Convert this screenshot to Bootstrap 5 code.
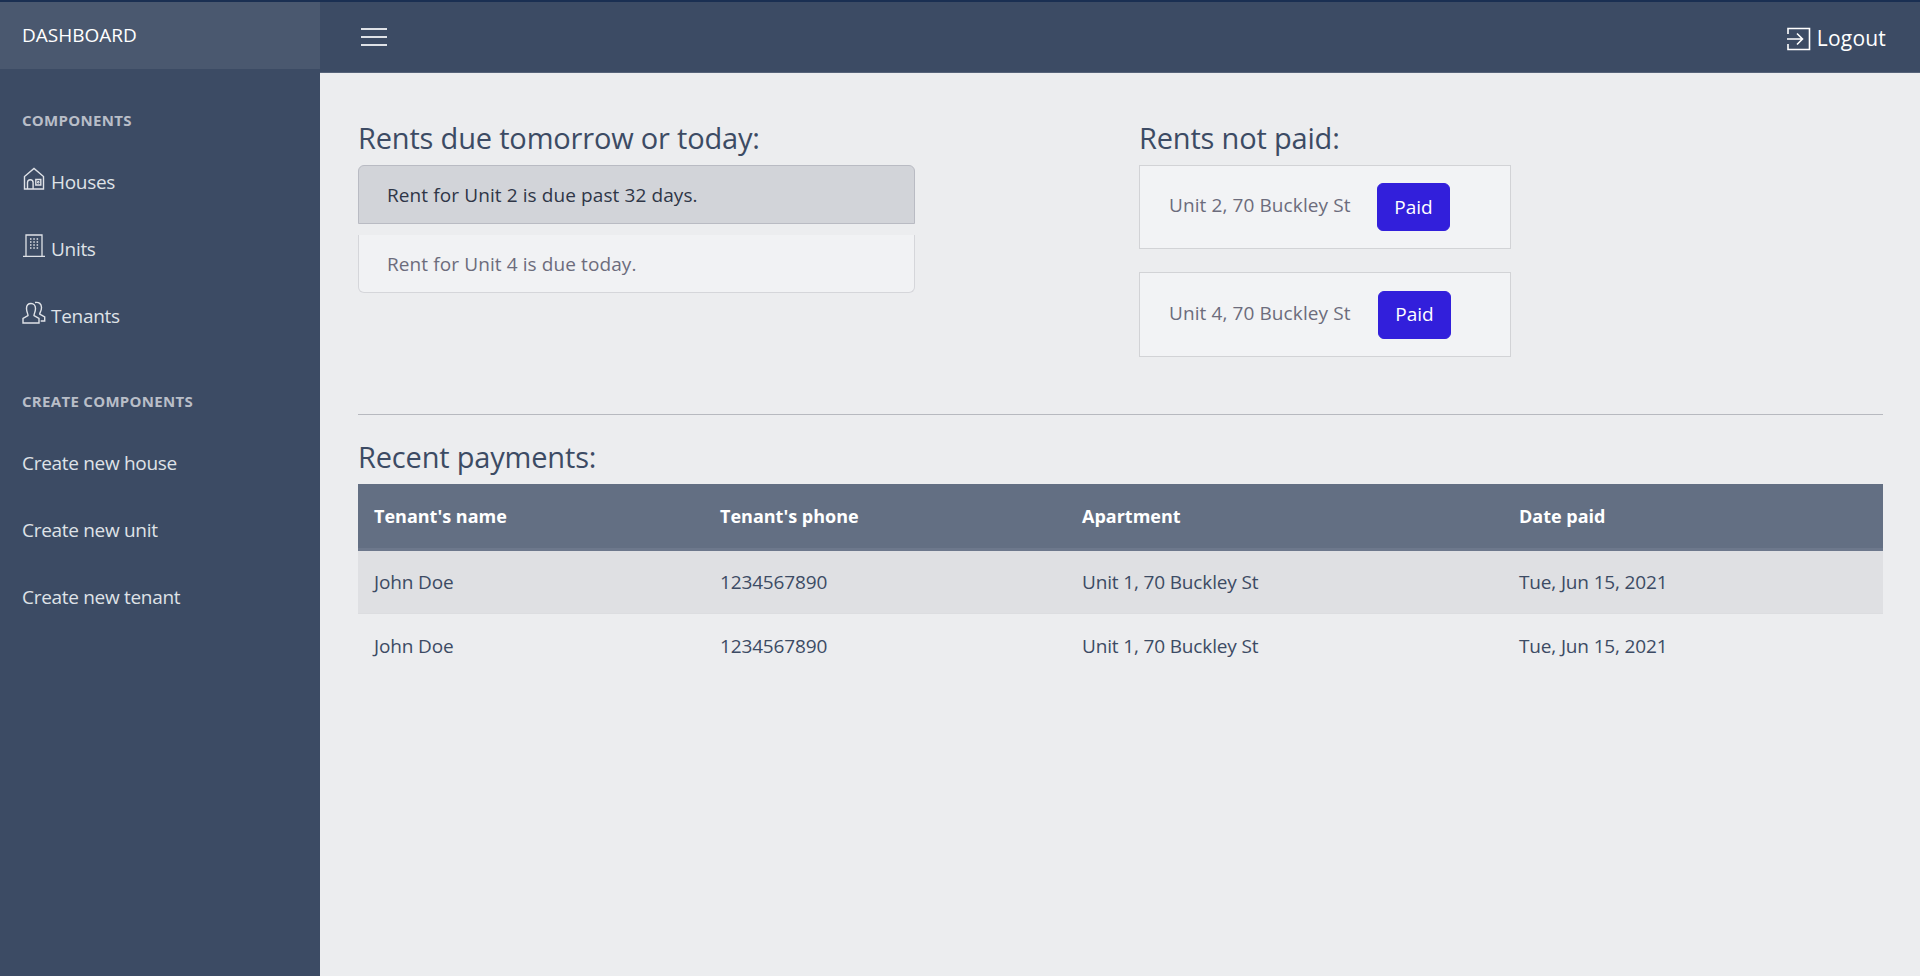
<!DOCTYPE html>
<html lang="en">
  <head>
    <meta charset="UTF-8" />
    <meta name="viewport" content="width=device-width, initial-scale=1.0" />
    <title>Dashboard</title>
    <link href="https://cdn.jsdelivr.net/npm/bootstrap@5.3.2/dist/css/bootstrap.min.css" rel="stylesheet" />
    <style>
      body {
        font-family: "Open Sans", "Noto Sans", sans-serif;
        background: #ecedef;
        color: #3c4b64;
        height: 976px;
        overflow: hidden;
        border-top: 2px solid #1a2f52;
      }
      .app-shell { height: 974px; }
      .side-nav { width: 320px; flex: none; background: #3c4b64; }
      .side-brand { height: 67px; background: #4a586f; color: #fff; font-size: 19px; padding-left: 22px; }
      .side-title { color: #b9bec8; font-size: 15px; font-weight: 700; padding-left: 22px; letter-spacing: 0.3px; line-height: 20px; }
      .side-link { color: #dfe2e7; font-size: 19px; padding-left: 22px; text-decoration: none; height: 67px; letter-spacing: -0.3px; }
      .side-link svg { margin-right: 5px; margin-top: -7px; }
      .side-group { margin-top: 19px; }
      .top-bar { height: 71px; background: #3c4b64; padding: 0 34px 0 41px; border-bottom: 1px solid #566379; }
      .top-bar a { color: #fff; font-size: 21px; text-decoration: none; letter-spacing: 0.2px; padding-top: 4px; gap: 6px; }
      .page-body { padding: 43px 37px 0 38px; }
      .block-title { font-size: 29px; font-weight: 400; color: #3c4b64; margin: 0; line-height: 44px; letter-spacing: -0.18px; height: 49px; }
      .recent-title { height: 52px; line-height: 50px; }
      .due-col { width: 781px; flex: none; }
      .due-list { width: 557px; }
      .due-list .list-group-item { height: 58px; padding: 1px 28px 0; font-size: 19px; letter-spacing: 0.1px; background: #f1f2f4; color: #6c6c7c; border-color: #d5d6da; display: flex; align-items: center; }
      .due-list .list-group-item.active-due { background: #d2d4d9; color: #2f3647; border-color: #b9bbc3; height: 59px; margin-bottom: 11px; border-bottom-width: 1px; }
      .due-list .list-group-item + .list-group-item { border-top-width: 0; }
      .unpaid-box { width: 372px; height: 84px; background: #f2f3f5; border: 1px solid #d2d3d6; padding-left: 29px; margin-bottom: 23px; border-radius: 0; color: #6c6c7c; font-size: 19px; letter-spacing: 0.1px; }
      .unpaid-box span { width: 208px; margin-top: -3px; }
      .unpaid-box + .unpaid-box { height: 85px; }
      .unpaid-box + .unpaid-box span { width: 209px; }
      .btn-paid { background: #321fdb; border-color: #321fdb; color: #fff; width: 73px; height: 48px; font-size: 19px; padding: 0; }
      .btn-paid:hover { background: #2a1ab9; border-color: #2a1ab9; color: #fff; }
      .sep-line { border-top: 1px solid #b7b9bf; opacity: 1; margin: 57px 0 17px; }
      .pay-table { font-size: 19px; letter-spacing: -0.15px; margin: 0; --bs-table-bg: transparent; color: #3c4b64; table-layout: fixed; }
      .pay-table th { background: #636f83; color: #fff; height: 65px; vertical-align: middle; padding: 2px 16px 0; font-weight: 700; font-size: 18px; letter-spacing: 0; border-bottom: 3px solid #6d788c; }
      .pay-table td { height: 64px; vertical-align: middle; padding: 1px 16px 0; color: #3c4b64; border-bottom: 1px solid #dcdde0; }
      .pay-table tbody tr:first-child td { background: #dfe0e3; }
      .pay-table tbody tr:last-child td { border-bottom: 0; }
    </style>
  </head>
  <body>
    <div class="d-flex app-shell">
      <aside class="side-nav d-flex flex-column">
        <div class="side-brand d-flex align-items-center">DASHBOARD</div>
        <div class="side-title" style="margin-top:41px">COMPONENTS</div>
        <nav class="d-flex flex-column side-group">
          <a class="side-link d-flex align-items-center" href="#">
            <svg width="24" height="24" viewBox="0 0 24 24" fill="none" stroke="currentColor" stroke-width="1.4"><path d="M2.500 22V9.500L12 1.500l9.500 8V22z"/><path d="M5.500 22v-6.500a2.800 2.800 0 0 1 5.600 0V22"/><path d="M13.800 12.500h5v5.500h-5z"/><path d="M15.600 14.500h1.400v1.500h-1.400z" stroke-width="1"/></svg>
            Houses
          </a>
          <a class="side-link d-flex align-items-center" href="#">
            <svg width="24" height="24" viewBox="0 0 24 24" fill="none" stroke="currentColor" stroke-width="1.300"><path d="M4 22V1h16v21M1 22.300h22"/><path d="M8 5h1.500M11.300 5h1.500M14.600 5h1.500M8 8h1.500M11.300 8h1.500M14.600 8h1.500M8 11h1.500M11.300 11h1.500M14.600 11h1.500M8 14h1.500M11.300 14h1.500M14.600 14h1.500" stroke-width="1.600"/></svg>
            Units
          </a>
          <a class="side-link d-flex align-items-center" href="#">
            <svg width="24" height="24" viewBox="0 0 24 24" fill="none" stroke="currentColor" stroke-width="1.400"><path d="M9 2.500c2.800 0 4.500 2 4.500 5S12 13 12 14.500l5 3v4.500H1v-4.500l5-3C6 13 4.500 10.500 4.500 7.500S6.200 2.500 9 2.500z"/><path d="M13 1.500c4-.8 6.500 1.500 6.500 5s-1.800 5-1.800 6.500l5 3v4h-4"/></svg>
            Tenants
          </a>
        </nav>
        <div class="side-title" style="margin-top:41px">CREATE COMPONENTS</div>
        <nav class="d-flex flex-column side-group">
          <a class="side-link d-flex align-items-center" href="#">Create new house</a>
          <a class="side-link d-flex align-items-center" href="#">Create new unit</a>
          <a class="side-link d-flex align-items-center" href="#">Create new tenant</a>
        </nav>
      </aside>
      <div class="flex-grow-1 d-flex flex-column">
        <header class="top-bar d-flex align-items-center justify-content-between">
          <svg width="26" height="20" viewBox="0 0 26 20" stroke="#dfe2e7" stroke-width="2"><path d="M0 2h26M0 10h26M0 18h26"/></svg>
          <a href="#" class="d-flex align-items-center">
            <svg width="24" height="24" viewBox="0 0 24 24" fill="none" stroke="currentColor" stroke-width="1.600"><path d="M1 7V1.500h21.500v21H1V17"/><path d="M0 12h15M10 6.500l5.500 5.500-5.500 5.500"/></svg>
            Logout
          </a>
        </header>
        <main class="page-body">
          <div class="d-flex">
            <section class="due-col">
              <h4 class="block-title">Rents due tomorrow or today:</h4>
              <div class="list-group due-list">
                <div class="list-group-item active-due">Rent for Unit 2 is due past 32 days.</div>
                <div class="list-group-item">Rent for Unit 4 is due today.</div>
              </div>
            </section>
            <section>
              <h4 class="block-title">Rents not paid:</h4>
              <div class="unpaid-box d-flex align-items-center">
                <span>Unit 2, 70 Buckley St</span>
                <button class="btn btn-paid">Paid</button>
              </div>
              <div class="unpaid-box d-flex align-items-center mb-0">
                <span>Unit 4, 70 Buckley St</span>
                <button class="btn btn-paid">Paid</button>
              </div>
            </section>
          </div>
          <hr class="sep-line" />
          <h4 class="block-title recent-title">Recent payments:</h4>
          <table class="table pay-table">
            <colgroup><col style="width:346px" /><col style="width:362px" /><col style="width:437px" /><col /></colgroup>
            <thead>
              <tr><th>Tenant's name</th><th>Tenant's phone</th><th>Apartment</th><th>Date paid</th></tr>
            </thead>
            <tbody>
              <tr><td>John Doe</td><td>1234567890</td><td>Unit 1, 70 Buckley St</td><td>Tue, Jun 15, 2021</td></tr>
              <tr><td>John Doe</td><td>1234567890</td><td>Unit 1, 70 Buckley St</td><td>Tue, Jun 15, 2021</td></tr>
            </tbody>
          </table>
        </main>
      </div>
    </div>
    <script src="https://cdn.jsdelivr.net/npm/bootstrap@5.3.2/dist/js/bootstrap.bundle.min.js"></script>
  </body>
</html>
